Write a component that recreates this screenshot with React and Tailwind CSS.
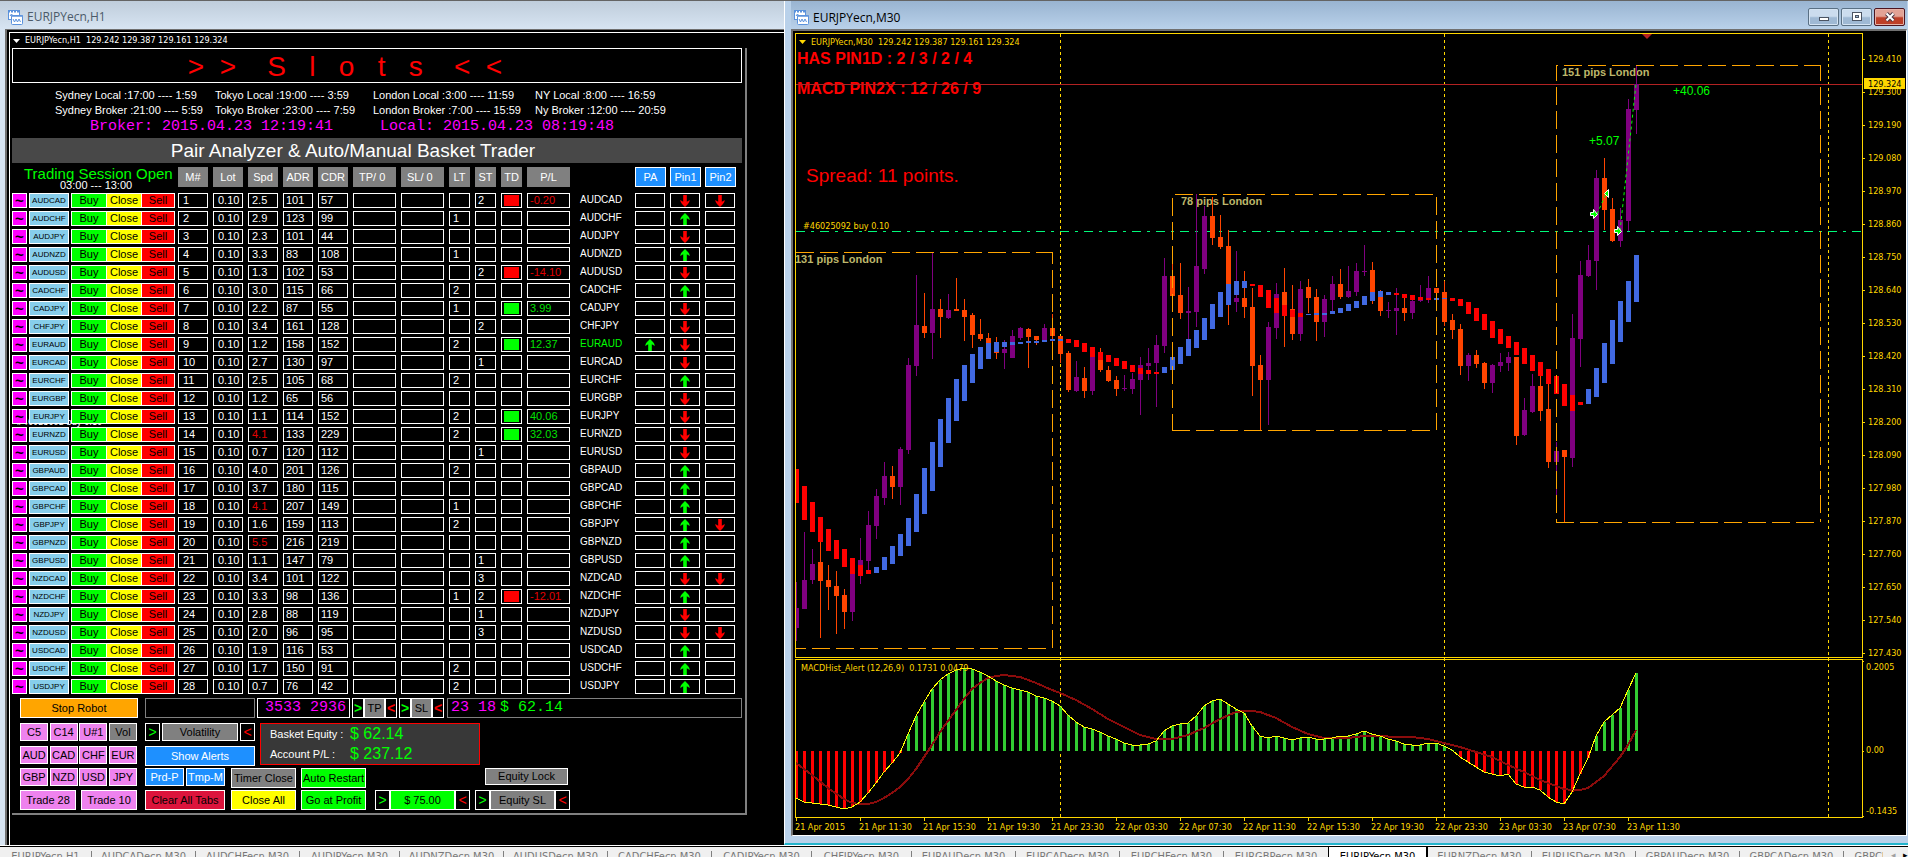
import clsx from "clsx";

// pair, spread, adr, cdr, long trades, short trades, P/L, PA, pin1, pin2
const PAIRS = [
  ["AUDCAD", "2.5", 101, 57, "", 2, "-0.20", "", "down", "down"],
  ["AUDCHF", "2.9", 123, 99, 1, "", "", "", "up", ""],
  ["AUDJPY", "2.3", 101, 44, "", "", "", "", "down", ""],
  ["AUDNZD", "3.3", 83, 108, 1, "", "", "", "up", ""],
  ["AUDUSD", "1.3", 102, 53, "", 2, "-14.10", "", "down", ""],
  ["CADCHF", "3.0", 115, 66, 2, "", "", "", "up", ""],
  ["CADJPY", "2.2", 87, 55, 1, "", "3.99", "", "down", ""],
  ["CHFJPY", "3.4", 161, 128, "", 2, "", "", "down", ""],
  ["EURAUD", "1.2", 158, 152, 2, "", "12.37", "up", "down", ""],
  ["EURCAD", "2.7", 130, 97, "", 1, "", "", "down", ""],
  ["EURCHF", "2.5", 105, 68, 2, "", "", "", "up", ""],
  ["EURGBP", "1.2", 65, 56, "", "", "", "", "down", ""],
  ["EURJPY", "1.1", 114, 152, 2, "", "40.06", "", "down", ""],
  ["EURNZD", "4.1", 133, 229, 2, "", "32.03", "", "down", ""],
  ["EURUSD", "0.7", 120, 112, "", 1, "", "", "down", ""],
  ["GBPAUD", "4.0", 201, 126, 2, "", "", "", "up", ""],
  ["GBPCAD", "3.7", 180, 115, "", "", "", "", "up", ""],
  ["GBPCHF", "4.1", 207, 149, 1, "", "", "", "up", ""],
  ["GBPJPY", "1.6", 159, 113, 2, "", "", "", "up", "down"],
  ["GBPNZD", "5.5", 216, 219, "", "", "", "", "up", ""],
  ["GBPUSD", "1.1", 147, 79, "", 1, "", "", "up", ""],
  ["NZDCAD", "3.4", 101, 122, "", 3, "", "", "down", "down"],
  ["NZDCHF", "3.3", 98, 136, 1, 2, "-12.01", "", "up", ""],
  ["NZDJPY", "2.8", 88, 119, "", 1, "", "", "down", ""],
  ["NZDUSD", "2.0", 96, 95, "", 3, "", "", "down", "down"],
  ["USDCAD", "1.9", 116, 53, "", "", "", "", "up", ""],
  ["USDCHF", "1.7", 150, 91, 2, "", "", "", "up", ""],
  ["USDJPY", "0.7", 76, 42, 2, "", "", "", "up", ""],
];

const SESSIONS = [
  ["Sydney Local :17:00 ---- 1:59", "Sydney Broker :21:00 ---- 5:59"],
  ["Tokyo Local :19:00 ---- 3:59", "Tokyo Broker :23:00 ---- 7:59"],
  ["London Local :3:00 ---- 11:59", "London Broker :7:00 ---- 15:59"],
  ["NY Local :8:00 ---- 16:59", "Ny Broker :12:00 ---- 20:59"],
];

const TABS = [
  "EURJPYecn,H1", "AUDCADecn,M30", "AUDCHFecn,M30", "AUDJPYecn,M30", "AUDNZDecn,M30", "AUDUSDecn,M30",
  "CADCHFecn,M30", "CADJPYecn,M30", "CHFJPYecn,M30", "EURAUDecn,M30", "EURCADecn,M30", "EURCHFecn,M30",
  "EURGBPecn,M30", "EURJPYecn,M30", "EURNZDecn,M30", "EURUSDecn,M30", "GBPAUDecn,M30", "GBPCADecn,M30",
  "GBPCHFecn,M30",
];
const ACTIVE_TAB = 13;

// candles: wick top, body top, body bottom, wick bottom, 1 = rising
const CANDLES = [
  [582, 608, 628, 641, 1], [532, 580, 609, 609, 1], [549, 564, 580, 584, 1], [542, 562, 581, 638, 0],
  [565, 580, 587, 610, 0], [571, 586, 596, 634, 0], [589, 595, 612, 629, 0], [574, 574, 612, 621, 1],
  [538, 560, 576, 584, 1], [511, 525, 561, 574, 1], [489, 496, 526, 539, 1], [462, 476, 498, 505, 1],
  [466, 476, 487, 499, 0], [447, 449, 487, 505, 1], [358, 365, 450, 454, 1], [275, 325, 366, 376, 1],
  [293, 326, 333, 338, 0], [253, 309, 333, 359, 1], [299, 309, 317, 338, 0], [294, 310, 318, 319, 1],
  [278, 309, 311, 311, 0], [299, 310, 317, 341, 0], [313, 315, 335, 348, 0], [319, 334, 339, 341, 0],
  [333, 338, 343, 348, 0], [337, 345, 353, 359, 0], [340, 349, 353, 369, 1], [330, 336, 358, 358, 1],
  [327, 328, 338, 340, 1], [328, 329, 337, 368, 0], [336, 336, 340, 345, 0], [324, 328, 340, 340, 1],
  [314, 328, 336, 343, 0], [336, 336, 354, 363, 0], [351, 353, 390, 392, 0], [361, 377, 391, 392, 1],
  [367, 378, 391, 398, 0], [350, 350, 391, 395, 1], [348, 352, 370, 372, 0], [366, 370, 381, 382, 0],
  [376, 380, 389, 396, 0], [375, 388, 389, 391, 1], [373, 379, 389, 394, 1], [357, 365, 380, 415, 1],
  [348, 363, 366, 380, 1], [335, 345, 363, 407, 1], [258, 276, 346, 353, 1], [264, 276, 296, 296, 0],
  [263, 295, 313, 319, 0], [287, 311, 313, 339, 1], [194, 266, 312, 327, 1], [206, 216, 269, 274, 1],
  [197, 216, 238, 245, 0], [215, 237, 247, 249, 0], [230, 246, 285, 325, 0], [251, 298, 302, 312, 1],
  [271, 298, 307, 318, 0], [288, 307, 366, 396, 0], [355, 365, 380, 430, 0], [322, 327, 380, 425, 1],
  [283, 294, 328, 339, 1], [268, 292, 316, 347, 0], [285, 309, 334, 340, 0], [281, 289, 334, 341, 1],
  [279, 287, 298, 313, 0], [289, 297, 322, 341, 0], [295, 299, 322, 337, 1], [276, 284, 300, 312, 1],
  [269, 284, 297, 299, 0], [266, 291, 297, 298, 1], [263, 271, 292, 296, 1], [245, 271, 272, 276, 1],
  [262, 270, 301, 304, 0], [290, 291, 311, 316, 0], [302, 310, 311, 318, 1], [288, 308, 311, 335, 1],
  [295, 308, 313, 321, 0], [299, 301, 313, 319, 1], [285, 297, 301, 302, 1], [276, 288, 298, 303, 1],
  [288, 288, 293, 298, 0], [281, 292, 322, 326, 0], [314, 320, 330, 339, 0], [324, 329, 366, 375, 0],
  [353, 355, 366, 381, 1], [350, 355, 364, 368, 0], [362, 363, 383, 389, 0], [364, 365, 383, 393, 1],
  [353, 362, 366, 372, 1], [352, 357, 363, 371, 1], [357, 357, 436, 445, 0], [398, 410, 435, 436, 1],
  [374, 386, 412, 413, 1], [376, 386, 411, 421, 0], [384, 409, 462, 468, 0], [442, 451, 462, 496, 1],
  [450, 450, 457, 522, 0], [314, 338, 458, 467, 1], [261, 275, 339, 367, 1], [245, 260, 276, 277, 1],
  [170, 178, 261, 290, 1], [158, 178, 210, 230, 0], [198, 209, 241, 242, 0], [208, 220, 241, 247, 1],
  [99, 109, 221, 231, 1], [65, 84, 110, 134, 1],
];

// smoothed Heiken Ashi bars: top, bottom, 1 = rising
const SMOOTHED = [
  [469, 503, 0], [486, 520, 0], [502, 532, 0], [517, 542, 0], [529, 551, 0], [540, 559, 0], [549, 567, 0],
  [558, 574, 0], [565, 576, 0], [570, 574, 0], [567, 573, 1], [557, 570, 1], [546, 564, 1], [534, 556, 1],
  [518, 546, 1], [494, 532, 1], [468, 514, 1], [442, 491, 1], [419, 467, 1], [398, 443, 1], [379, 421, 1],
  [365, 401, 1], [354, 383, 1], [347, 369, 1], [343, 359, 1], [342, 352, 1], [342, 347, 1], [342, 345, 1],
  [342, 344, 1], [341, 343, 1], [341, 343, 1], [340, 342, 1], [339, 341, 1], [339, 341, 1], [339, 343, 0],
  [340, 347, 0], [343, 352, 0], [347, 357, 0], [352, 360, 0], [355, 362, 0], [358, 366, 0], [361, 369, 0],
  [365, 372, 0], [368, 374, 0], [370, 374, 0], [372, 374, 0], [367, 373, 1], [357, 370, 1], [347, 364, 1],
  [339, 356, 1], [330, 348, 1], [318, 340, 1], [304, 329, 1], [292, 317, 1], [284, 305, 1], [281, 295, 1],
  [281, 288, 1], [284, 286, 0], [285, 297, 0], [290, 308, 0], [298, 313, 0], [305, 316, 0], [310, 317, 0],
  [313, 317, 0], [314, 315, 1], [313, 315, 1], [313, 315, 1], [311, 314, 1], [308, 313, 1], [304, 311, 1],
  [301, 308, 1], [296, 305, 1], [292, 301, 1], [291, 297, 1], [292, 295, 1], [293, 295, 0], [294, 298, 0],
  [295, 300, 0], [297, 300, 0], [298, 300, 0], [298, 300, 1], [298, 299, 1], [298, 301, 0], [299, 306, 0],
  [302, 314, 0], [308, 321, 0], [314, 330, 0], [321, 338, 0], [329, 344, 0], [336, 348, 0], [342, 355, 0],
  [348, 364, 0], [355, 371, 0], [362, 376, 0], [369, 384, 0], [376, 394, 0], [384, 406, 0], [395, 411, 0],
  [402, 405, 0], [389, 404, 1], [368, 397, 1], [343, 383, 1], [320, 364, 1], [301, 342, 1], [281, 322, 1],
  [255, 302, 1],
];

const MACD = [
  798, 802, 803, 804, 805, 807, 809, 807, 802, 793, 783, 772, 763, 753, 734, 716, 702, 689, 680, 674, 670, 668,
  669, 672, 676, 681, 685, 688, 690, 692, 696, 698, 701, 706, 715, 722, 727, 729, 732, 736, 739, 743, 745, 745,
  744, 741, 731, 726, 724, 723, 716, 706, 701, 699, 704, 709, 713, 726, 736, 738, 736, 738, 740, 738, 737, 739,
  739, 738, 736, 736, 734, 731, 734, 736, 739, 741, 744, 745, 745, 743, 743, 746, 750, 757, 762, 767, 772, 774,
  776, 774, 784, 787, 787, 790, 797, 802, 804, 792, 774, 758, 736, 722, 715, 708, 690, 673,
];
const MACD_ZERO = 751;

// bar index, y
const SIGNAL = [
  [0, 763], [2, 775], [4, 788], [6, 799], [7, 803], [8, 804], [9, 804], [10, 802], [11, 798], [12, 793],
  [13, 787], [14, 779], [15, 769], [16, 757], [17, 745], [18, 732], [19, 721], [20, 710], [21, 699], [22, 689],
  [23, 683], [24, 678], [25, 676], [26, 675], [27, 676], [28, 677], [30, 683], [32, 690], [33, 693], [35, 700],
  [37, 709], [39, 719], [41, 727], [43, 735], [45, 739], [47, 739], [49, 735], [51, 728], [53, 719], [55, 712],
  [56, 711], [57, 711], [58, 712], [60, 718], [62, 727], [64, 734], [66, 738], [69, 738], [71, 736], [73, 736],
  [75, 737], [77, 737], [79, 739], [81, 743], [83, 747], [85, 752], [87, 757], [89, 765], [91, 772], [93, 780],
  [95, 786], [96, 789], [97, 790], [98, 790], [99, 788], [101, 776], [103, 757], [104, 745], [105, 730],
];

const TIMES = [
  "21 Apr 2015", "21 Apr 11:30", "21 Apr 15:30", "21 Apr 19:30", "21 Apr 23:30", "22 Apr 03:30", "22 Apr 07:30",
  "22 Apr 11:30", "22 Apr 15:30", "22 Apr 19:30", "22 Apr 23:30", "23 Apr 03:30", "23 Apr 07:30", "23 Apr 11:30",
];

const PRICES = [
  "129.410", "129.300", "129.190", "129.080", "128.970", "128.860", "128.750", "128.640", "128.530", "128.420",
  "128.310", "128.200", "128.090", "127.980", "127.870", "127.760", "127.650", "127.540", "127.430",
];

const barX = (i) => 796 + i * 8;

function Arrow({ dir }) {
  return (
    <svg
      viewBox="0 0 10 12"
      className={clsx("mx-auto h-3 w-[10px]", dir === "up" ? "fill-[#00ff00]" : "rotate-180 fill-[#ff0000]")}
      role="img"
      aria-label={dir}
    >
      <path d="M5 0 L8 3 Q9.600 4.600 9.800 7 L6.800 5.200 V12 H3.200 V5.200 L0.200 7 Q0.400 4.600 2 3 Z" />
    </svg>
  );
}

function ChartIcon() {
  return (
    <svg viewBox="0 0 15 15" className="h-[15px] w-[15px]" aria-hidden="true">
      <rect x="0.500" y="0.500" width="11" height="9" fill="#fff" stroke="#5b92dc" />
      <path d="M0 1.500H12" stroke="#5b92dc" strokeWidth="2" strokeDasharray="2 1" />
      <path d="M2 6l1.500-2L5 6" fill="none" stroke="#5b92dc" />
      <rect x="3.500" y="5.500" width="11" height="9" rx="1" fill="#fff" stroke="#5b92dc" />
      <path d="M3 6H15" stroke="#5b92dc" strokeWidth="1.500" />
      <path d="M5 9l1.500 3L8 9l1.500 3L11 9l1.500 3" fill="none" stroke="#5b92dc" />
    </svg>
  );
}

function Box({ className, children }) {
  return <div className={clsx("mr-[5px] flex h-[15px] items-center border border-white", className)}>{children}</div>;
}

function Btn({ className, children }) {
  return (
    <button
      type="button"
      className={clsx(
        "flex shrink-0 items-center justify-center border border-white leading-none whitespace-nowrap",
        className,
      )}
    >
      {children}
    </button>
  );
}

function Step({ dir, className }) {
  return (
    <Btn className={clsx("bg-black text-sm", dir === "more" ? "text-[#00ff00]" : "text-[#ff0000]", className)}>
      {dir === "more" ? ">" : "<"}
    </Btn>
  );
}

function PairTable() {
  return (
    <table className="mt-1 table-fixed border-collapse text-left">
      <colgroup>
        <col className="w-[166px]" />
        <col className="w-[35px]" span={5} />
        <col className="w-[48px]" span={2} />
        <col className="w-[26px]" span={3} />
        <col className="w-[53px]" />
        <col className="w-[55px]" />
        <col className="w-[35px]" span={3} />
      </colgroup>
      <thead>
        <tr className="h-[26px] align-top">
          <th className="p-0 font-normal">
            <p className="pl-3 text-[15px] leading-[14px] whitespace-nowrap text-[#00ff00]">Trading Session Open</p>
            <p className="pl-12 leading-[8px] text-white">03:00 --- 13:00</p>
          </th>
          {["M#", "Lot", "Spd", "ADR", "CDR", "TP/ 0", "SL/ 0", "LT", "ST", "TD", "P/L"].map((name) => (
            <th key={name} className="p-0 font-normal">
              <div
                className={clsx(
                  "mr-[5px] h-5 bg-[#808080] leading-5 whitespace-nowrap text-white",
                  name.includes("/ 0") ? "pl-[6px]" : "text-center",
                  name === "P/L" && "w-[43px]",
                )}
              >
                {name}
              </div>
            </th>
          ))}
          <th className="p-0" aria-label="Pair" />
          {["PA", "Pin1", "Pin2"].map((name) => (
            <th key={name} className="p-0 font-normal">
              <Btn className="h-5 w-[31px] bg-[#1e90ff] text-white">{name}</Btn>
            </th>
          ))}
        </tr>
      </thead>
      <tbody>
        {PAIRS.map(([pair, spread, adr, cdr, long, short, profit, pa, pin1, pin2], i) => {
          const loss = profit.startsWith("-");
          return (
            <tr key={pair} className="h-[18px] align-top">
              <td className="relative isolate p-0">
                {pair === "EURJPY" && (
                  <span className="absolute top-2 left-1 -z-10 font-['DejaVu_Sans_Condensed','DejaVu_Sans',sans-serif] text-[9px] leading-[10px] text-white">
                    #46025092 buy 0.10
                  </span>
                )}
                <div className="flex text-black">
                  <Btn className="h-[15px] w-[15px] bg-[#ff00ff] text-[15px] font-bold">~</Btn>
                  <Btn className="mx-[2px] h-[15px] w-10 bg-[#87ceeb] text-[8px]">{pair}</Btn>
                  <Btn className="h-[15px] w-[35px] border-r-0 bg-[#00ff00]">Buy</Btn>
                  <Btn className="h-[15px] w-[35px] border-r-0 bg-[#ffff00]">Close</Btn>
                  <Btn className="h-[15px] w-[34px] bg-[#ff0000]">Sell</Btn>
                </div>
              </td>
              <td className="p-0"><Box className="pl-1">{i + 1}</Box></td>
              <td className="p-0"><Box className="pl-1">0.10</Box></td>
              <td className="p-0">
                <Box className={clsx("pl-[3px]", Number(spread) > 4 && "text-[#e00000]")}>{spread}</Box>
              </td>
              <td className="p-0"><Box className="pl-[2px]">{adr}</Box></td>
              <td className="p-0"><Box className="pl-[2px]">{cdr}</Box></td>
              <td className="p-0"><Box /></td>
              <td className="p-0"><Box /></td>
              <td className="p-0"><Box className="pl-[3px]">{long}</Box></td>
              <td className="p-0"><Box className="pl-[2px]">{short}</Box></td>
              <td className="p-0">
                <Box className="justify-center">
                  {profit && <span className={clsx("h-[11px] w-[15px]", loss ? "bg-[#ff0000]" : "bg-[#00ff00]")} />}
                </Box>
              </td>
              <td className="p-0">
                <Box className={clsx("w-[43px] pl-[2px]", loss ? "text-[#e00000]" : "text-[#00e000]")}>{profit}</Box>
              </td>
              <td className={clsx("p-0 text-[10px] leading-[14px]", pair === "EURAUD" && "text-[#00ff00]")}>{pair}</td>
              <td className="p-0"><Box>{pa && <Arrow dir={pa} />}</Box></td>
              <td className="p-0"><Box>{pin1 && <Arrow dir={pin1} />}</Box></td>
              <td className="p-0"><Box>{pin2 && <Arrow dir={pin2} />}</Box></td>
            </tr>
          );
        })}
      </tbody>
    </table>
  );
}

function Controls() {
  const currency = "h-[18px] w-7 bg-[#ee82ee]";
  return (
    <div className="mt-px pb-[3px] pl-2 text-black">
      <div className="flex h-5">
        <Btn className="w-[118px] bg-[#ffa500]">Stop Robot</Btn>
        <div className="ml-[7px] w-[110px] border border-[#808080]" />
        <div className="ml-[2px] w-[93px] border border-white pr-[3px] text-right font-['Liberation_Mono',monospace] text-[15px] leading-[18px] text-[#ff00ff]">
          3533 2936
        </div>
        <Step dir="more" className="ml-[2px] w-3 font-bold" />
        <Btn className="w-[21px] bg-[#808080]">TP</Btn>
        <Step dir="less" className="w-3 font-bold" />
        <Step dir="more" className="ml-[2px] w-3 font-bold" />
        <Btn className="w-[21px] bg-[#808080]">SL</Btn>
        <Step dir="less" className="w-3 font-bold" />
        <div className="ml-[3px] flex flex-1 border border-[#808080] pl-[3px] font-['Liberation_Mono',monospace] text-[15px] leading-[18px] text-[#ff00ff]">
          23 18<span className="ml-1 text-[#00ff00]">$ 62.14</span>
        </div>
      </div>

      <div className="mt-[5px] flex gap-2">
        <div className="flex w-[117px] flex-col gap-1">
          <div className="mb-px flex justify-between">
            <Btn className={currency}>C5</Btn>
            <Btn className={currency}>C14</Btn>
            <Btn className={currency}>U#1</Btn>
            <Btn className="h-[18px] w-7 bg-[#808080]">Vol</Btn>
          </div>
          <div className="flex justify-between">
            {["AUD", "CAD", "CHF", "EUR"].map((c) => <Btn key={c} className={currency}>{c}</Btn>)}
          </div>
          <div className="flex justify-between">
            {["GBP", "NZD", "USD", "JPY"].map((c) => <Btn key={c} className={currency}>{c}</Btn>)}
          </div>
          <div className="flex justify-between">
            <Btn className="h-5 w-14 bg-[#ee82ee]">Trade 28</Btn>
            <Btn className="h-5 w-14 bg-[#ee82ee]">Trade 10</Btn>
          </div>
        </div>

        <div>
          <div className="flex">
            <div className="w-[110px]">
              <div className="flex h-[18px] justify-between">
                <Step dir="more" className="w-[15px]" />
                <Btn className="w-[76px] bg-[#808080]">Volatility</Btn>
                <Step dir="less" className="w-[15px]" />
              </div>
              <Btn className="mt-[5px] h-5 w-full bg-[#1e90ff] text-white">Show Alerts</Btn>
            </div>
            <dl className="ml-[5px] grid h-[42px] w-[220px] grid-cols-[80px_1fr] border border-[#ff0000] bg-[#383838] pt-px pl-[9px] leading-[18px] text-white">
              <dt>Basket Equity :</dt>
              <dd className="text-base leading-[18px] text-[#00ff00]">$ 62.14</dd>
              <dt>Account P/L :</dt>
              <dd className="text-base leading-[18px] text-[#00ff00]">$ 237.12</dd>
            </dl>
          </div>

          <div className="mt-[2px] flex items-start">
            <Btn className="h-[18px] w-[39px] bg-[#1e90ff] text-white">Prd-P</Btn>
            <Btn className="ml-[2px] h-[18px] w-[39px] bg-[#1e90ff] text-white">Tmp-M</Btn>
            <Btn className="ml-[6px] h-5 w-[65px] bg-[#808080]">Timer Close</Btn>
            <Btn className="ml-[5px] h-5 w-[65px] bg-[#00ff00]">Auto Restart</Btn>
            <Btn className="ml-[119px] h-[17px] w-[83px] bg-[#808080]">Equity Lock</Btn>
          </div>

          <div className="mt-[2px] flex h-5">
            <Btn className="w-20 bg-[#dc143c]">Clear All Tabs</Btn>
            <Btn className="ml-[6px] w-[65px] bg-[#ffff00]">Close All</Btn>
            <Btn className="ml-[5px] w-[65px] bg-[#00ff00]">Go at Profit</Btn>
            <Step dir="more" className="ml-[9px] w-[15px]" />
            <Btn className="w-[65px] bg-[#00ff00]">$ 75.00</Btn>
            <Step dir="less" className="w-[15px]" />
            <Step dir="more" className="ml-[5px] w-[15px]" />
            <Btn className="w-[65px] bg-[#808080]">Equity SL</Btn>
            <Step dir="less" className="w-[15px]" />
          </div>
        </div>
      </div>
    </div>
  );
}

function BasketTrader() {
  return (
    <section className="flex w-[784px] shrink-0 flex-col bg-[#d7e4f2]">
      <header className="flex h-7 items-center gap-1 bg-linear-to-b from-[#bfcddb] to-[#d7e4f2] pt-1 pl-2">
        <ChartIcon />
        <h1 className="font-['Open_Sans','Noto_Sans',sans-serif] text-xs text-[#4c5a68]">EURJPYecn,H1</h1>
      </header>
      <div className="ml-[5px] flex flex-1 flex-col border-t border-l-2 border-[#707070] bg-black pt-[2px] pl-[2px]">
        <div className="flex-1 border-t border-l border-white pl-[2px] text-[11px] leading-[13px] text-white">
          <p className="flex h-[15px] items-center gap-[5px] pl-px font-['DejaVu_Sans_Condensed','DejaVu_Sans',sans-serif] text-[9px] whitespace-pre">
            <svg viewBox="0 0 7 4" className="h-1 w-[7px] fill-white" aria-hidden="true">
              <path d="M0 0H7L3.500 4Z" />
            </svg>
            {"EURJPYecn,H1  129.242 129.387 129.161 129.324"}
          </p>
          <div className="w-[735px] border-r-2 border-b-2 border-[#808080] pr-[3px]">
            <h2 className="h-[35px] border border-white pr-16 text-center text-[28px] leading-[35px] whitespace-pre text-[#ff0000]">
              {">  >    S   l   o   t   s    <  <"}
            </h2>
            <div className="grid grid-cols-[160px_158px_162px_1fr] pt-[5px] pl-[43px] leading-[15px]">
              {SESSIONS.map(([local, broker]) => (
                <div key={local}>
                  <p>{local}</p>
                  <p>{broker}</p>
                </div>
              ))}
            </div>
            <div className="mb-[3px] flex h-[17px] gap-[47px] pl-[78px] font-['Liberation_Mono',monospace] text-[15px] leading-[17px] text-[#ff00ff]">
              <span>Broker: 2015.04.23 12:19:41</span>
              <span>Local: 2015.04.23 08:19:48</span>
            </div>
            <h3 className="h-[25px] bg-[#484848] pr-12 text-center text-[19px] leading-[25px]">
              Pair Analyzer &amp; Auto/Manual Basket Trader
            </h3>
            <PairTable />
            <Controls />
          </div>
        </div>
      </div>
    </section>
  );
}

function PriceChart() {
  return (
    <svg
      viewBox="793 31 1113 804"
      className="block h-auto w-full bg-black font-['DejaVu_Sans_Condensed','DejaVu_Sans',sans-serif] text-[9px]"
      role="img"
      aria-label="EURJPYecn M30 chart"
    >
      <g fontFamily="'Liberation Sans', Arial, sans-serif">
        <g fill="#ff0000">
          <text x="797" y="64" fontSize="16" fontWeight="bold">HAS PIN1D : 2 / 3 / 2 / 4</text>
          <text x="797" y="94" fontSize="16" fontWeight="bold">MACD PIN2X : 12 / 26 / 9</text>
          <text x="806" y="182" fontSize="19">Spread: 11 points.</text>
        </g>
        <g fill="#bdb76b" fontSize="11" fontWeight="bold">
          <text x="795" y="263">131 pips London</text>
          <text x="1181" y="205">78 pips London</text>
          <text x="1562" y="76">151 pips London</text>
        </g>
        <g fill="#00ff00" fontSize="12">
          <text x="1589" y="145">+5.07</text>
          <text x="1673" y="95">+40.06</text>
        </g>
      </g>

      <g shapeRendering="crispEdges">
        {/* day separators */}
        <path
          d="M1060.500 34V817M1444.500 34V817M1828.500 34V817"
          stroke="#ffd700"
          strokeDasharray="3 3"
        />
        <path d="M796 84.500H1862" stroke="#b22222" />
        <path d="M796 231.500H1862" stroke="#00fa7a" strokeDasharray="9 6 3 6" />

        {CANDLES.map(([high, top, bottom, low, up], i) => (
          <g key={i} fill={up ? "#800080" : "#ff4500"}>
            <rect x={barX(i)} y={high} width="1" height={low - high} />
            <rect x={barX(i) - 2} y={top} width="5" height={bottom - top} />
          </g>
        ))}
        {SMOOTHED.map(([top, bottom, up], i) => (
          <rect
            key={i}
            x={barX(i) - 2}
            y={top}
            width="5"
            height={bottom - top}
            fill={up ? "#4169e1" : "#ff0000"}
          />
        ))}

        {/* London session ranges */}
        <g fill="none" stroke="#ffa500" strokeDasharray="18 6">
          <path d="M796 252.500H1052" />
          <path d="M1052.500 252V648" strokeDashoffset="6" />
          <path d="M788 648.500H1052" />
          <path d="M1436 194.500H1172" strokeDashoffset="-3" />
          <path d="M1172.500 198V430" />
          <path d="M1436.500 197V430" />
          <path d="M1172 430.500H1436" />
          <path d="M1556 65.500H1820" strokeDashoffset="16" />
          <path d="M1556.500 65V522" strokeDashoffset="2" />
          <path d="M1820.500 65V522" strokeDashoffset="2" />
          <path d="M1556 522.500H1820" />
        </g>

        {MACD.map((y, i) => (
          <rect
            key={i}
            x={barX(i) - 1}
            y={Math.min(y, MACD_ZERO)}
            width="3"
            height={Math.abs(MACD_ZERO - y)}
            fill={y < MACD_ZERO ? "#32cd32" : "#ff0000"}
          />
        ))}
        <polyline
          points={SIGNAL.map(([i, y]) => `${barX(i)},${y}`).join(" ")}
          fill="none"
          stroke="#8b0c0c"
          strokeWidth="2"
        />
        <polyline points={MACD.map((y, i) => `${barX(i)},${y}`).join(" ")} fill="none" stroke="#ffff00" />

        {/* left margin hides the half bar at the edge */}
        <rect x="793" y="31" width="2" height="804" fill="#000" />
        <path
          d="M795.500 33V658M795 33.500H1863M795 657.500H1863M795 659.500H1863M795.500 659V818M795 817.500H1863M1862.500 33V658M1862.500 659V818"
          stroke="#ffd700"
          fill="none"
        />
        <g fill="#ffd700">
          {PRICES.map((p, i) => <rect key={p} x="1863" y={59 + i * 33} width="2" height="1" />)}
          {TIMES.map((t, i) => <rect key={t} x={796 + i * 64} y="818" width="1" height="3" />)}
          <rect x="1863" y="661" width="1" height="1" />
          <rect x="1863" y="751" width="1" height="1" />
          <rect x="1863" y="816" width="1" height="1" />
        </g>
      </g>

      {/* orders */}
      <path d="M1597 214L1606 194M1620 231L1636 84" stroke="#00ff00" strokeDasharray="3 3" fill="none" />
      <g fill="#00ff00" stroke="#fff">
        <path d="M1590.500 212.500h3v-3l4 5l-4 4v-3h-3z" />
        <path d="M1614.500 229.500h3v-3l4 5l-4 4v-3h-3z" />
        <path d="M1608.500 189.500v8l-4-4z" />
      </g>
      <path d="M1642 34h10l-5 5z" fill="#b22222" />

      <g fill="#ffd700">
        <path d="M799 40h7l-3.500 4z" />
        <text x="811" y="45" xmlSpace="preserve">{"EURJPYecn,M30  129.242 129.387 129.161 129.324"}</text>
        <text x="803" y="229">#46025092 buy 0.10</text>
        <text x="801" y="671" xmlSpace="preserve">{"MACDHist_Alert (12,26,9)  0.1731 0.0479"}</text>
        {PRICES.map((p, i) => <text key={p} x="1868" y={62 + i * 33}>{p}</text>)}
        {TIMES.map((t, i) => <text key={t} x={795 + i * 64} y="830">{t}</text>)}
        <text x="1866" y="670">0.2005</text>
        <text x="1866" y="753">0.00</text>
        <text x="1866" y="814">-0.1435</text>
        <rect x="1864" y="78" width="41" height="11" />
      </g>
      <text x="1868" y="87" fill="#000">129.324</text>
    </svg>
  );
}

function ChartWindow() {
  const control =
    "flex h-[18px] w-[31px] items-center justify-center rounded-[2px] border border-[#5a7084] bg-linear-to-b from-[#cbdcee] from-45% to-[#9fb9d4] to-55% shadow-[inset_0_0_0_1px_#d5e4f3]";
  return (
    <section className="min-w-0 flex-1 border-b-2 border-l border-b-[#22b4cc] border-l-white bg-[#b9d1ea] pr-px pb-[7px] pl-[6px]">
      <header className="flex h-7 items-center bg-linear-to-b from-[#99b4d1] to-[#b9d1ea] pt-[5px] pl-[3px]">
        <ChartIcon />
        <h1 className="ml-1 flex-1 font-['Open_Sans','Noto_Sans',sans-serif] text-xs text-black">EURJPYecn,M30</h1>
        <div className="mb-px flex gap-[2px] pr-[2px]">
          <button type="button" aria-label="Minimize" className={control}>
            <svg viewBox="0 0 12 10" className="h-[10px] w-3">
              <rect x="1.500" y="5.500" width="9" height="3" fill="#fff" stroke="#4b5463" />
            </svg>
          </button>
          <button type="button" aria-label="Restore" className={control}>
            <svg viewBox="0 0 12 10" className="h-[10px] w-3">
              <rect x="1.500" y="0.500" width="9" height="8" fill="#fff" stroke="#4b5463" />
              <rect x="4.500" y="3.500" width="3" height="2" fill="#9fb9d4" stroke="#4b5463" />
            </svg>
          </button>
          <button
            type="button"
            aria-label="Close"
            className="flex h-[18px] w-[31px] items-center justify-center rounded-[2px] border border-[#4d1520] bg-linear-to-b from-[#e2a295] from-45% to-[#bd3f28] to-55% shadow-[inset_0_0_0_1px_#e5b3a8]"
          >
            <svg viewBox="0 0 12 10" className="h-[10px] w-3">
              <path d="M2.500 1.500L9.500 8.500M9.500 1.500L2.500 8.500" stroke="#4b3a48" strokeWidth="4" />
              <path d="M2.500 1.500L9.500 8.500M9.500 1.500L2.500 8.500" stroke="#fff" strokeWidth="2" />
            </svg>
          </button>
        </div>
      </header>
      <div className="border-t-2 border-r border-b border-l-2 border-t-[#707070] border-r-white border-b-white border-l-[#707070]">
        <PriceChart />
      </div>
    </section>
  );
}

function ChartTabs() {
  return (
    <nav className="flex shrink-0 border-t border-white bg-[#f0f0f0]">
      <ul className="flex h-6 min-w-0 flex-1 overflow-hidden border-t border-black font-['DejaVu_Sans_Condensed','DejaVu_Sans',sans-serif] text-[11px] leading-none text-[#787878]">
        {TABS.map((tab, i) => (
          <li
            key={tab}
            className={clsx(
              "shrink-0",
              i === 0 ? "w-[92px]" : tab.includes("JPY") ? "w-25" : "w-26",
              i === ACTIVE_TAB && "border-r-2 border-l border-black bg-white text-black",
            )}
          >
            <a
              href="#"
              className={clsx(
                "mt-1 block text-center whitespace-nowrap",
                i !== ACTIVE_TAB && i !== ACTIVE_TAB - 1 && "border-r border-[#808080]",
              )}
            >
              {tab}
            </a>
          </li>
        ))}
      </ul>
      <div className="flex items-start gap-[7px] border-t border-black pt-1 pl-2 text-[9px] leading-none">
        <button type="button" aria-label="Scroll left" className="text-[#a0a0a0]">◂</button>
        <button type="button" aria-label="Scroll right" className="text-black">▸</button>
      </div>
    </nav>
  );
}

export default function App() {
  return (
    <div className="flex h-screen flex-col overflow-hidden border-t border-[#646464] bg-[#f0f0f0] font-['Liberation_Sans',Arial,sans-serif]">
      <main className="flex shrink-0">
        <BasketTrader />
        <ChartWindow />
      </main>
      <ChartTabs />
    </div>
  );
}
